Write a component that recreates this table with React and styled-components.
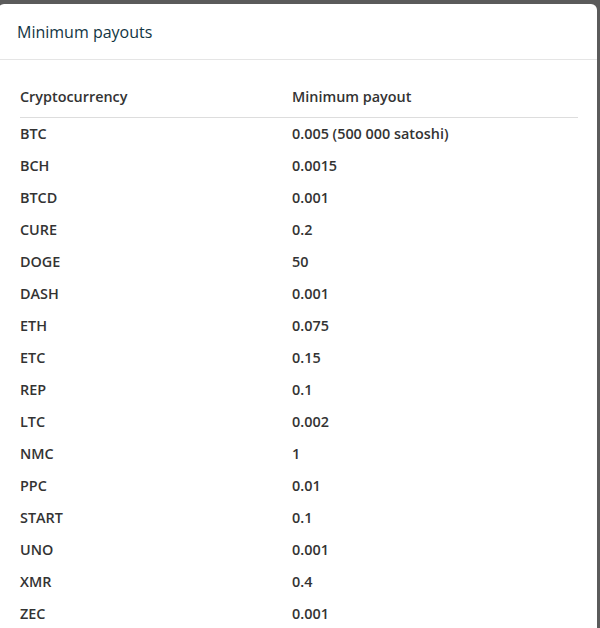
import React from 'react';
import styled, { createGlobalStyle } from 'styled-components';

const GlobalStyle = createGlobalStyle`
  html, body {
    margin: 0;
    padding: 0;
    background: #5b5b5b;
    overflow: hidden;
  }
`;

const Modal = styled.div`
  margin: 4px 3px 0 -2px;
  background: #fff;
  border-radius: 6px 6px 0 0;
  min-height: 640px;
  font-family: "Open Sans", "Liberation Sans", sans-serif;
`;

const Header = styled.div`
  height: 55px;
  display: flex;
  align-items: center;
  padding-left: 19px;
  border-bottom: 1px solid #e5e5e5;
`;

const Title = styled.h4`
  margin: 0;
  font-size: 16px;
  font-weight: 500;
  color: #123543;
`;

const Body = styled.div`
  padding: 18px 19px 0 22px;
`;

const Table = styled.table`
  width: 100%;
  border-collapse: collapse;
`;

const Th = styled.th`
  text-align: left;
  padding: 9px 0 10px;
  line-height: 20px;
  font-size: 14.4px;
  font-weight: 600;
  color: #333;
  border-bottom: 1px solid #ddd;
  width: ${(p) => p.$width || 'auto'};
`;

const Td = styled.td`
  padding: 6px 0;
  line-height: 20px;
  font-size: 14.4px;
  font-weight: 600;
  color: #333;
`;

const rows = [
  ['BTC', '0.005 (500 000 satoshi)'],
  ['BCH', '0.0015'],
  ['BTCD', '0.001'],
  ['CURE', '0.2'],
  ['DOGE', '50'],
  ['DASH', '0.001'],
  ['ETH', '0.075'],
  ['ETC', '0.15'],
  ['REP', '0.1'],
  ['LTC', '0.002'],
  ['NMC', '1'],
  ['PPC', '0.01'],
  ['START', '0.1'],
  ['UNO', '0.001'],
  ['XMR', '0.4'],
  ['ZEC', '0.001'],
];

export default function App() {
  return (
    <>
      <GlobalStyle />
      <Modal>
        <Header>
          <Title>Minimum payouts</Title>
        </Header>
        <Body>
          <Table>
            <thead>
              <tr>
                <Th $width="272px">Cryptocurrency</Th>
                <Th>Minimum payout</Th>
              </tr>
            </thead>
            <tbody>
              {rows.map(([coin, min]) => (
                <tr key={coin}>
                  <Td>{coin}</Td>
                  <Td>{min}</Td>
                </tr>
              ))}
            </tbody>
          </Table>
        </Body>
      </Modal>
    </>
  );
}
